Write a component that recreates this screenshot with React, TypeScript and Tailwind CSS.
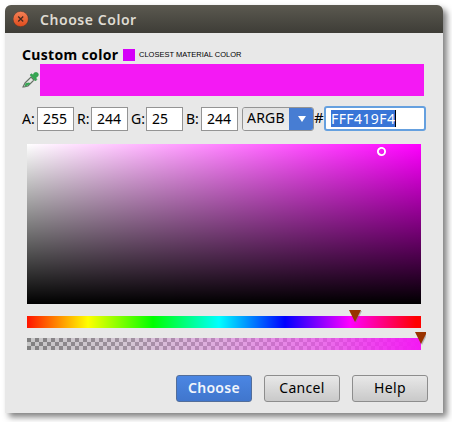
import React from "react";

const channels = [
  { label: "A:", value: "255", group: "w-[52px]" },
  { label: "R:", value: "244", group: "w-[51px]" },
  { label: "G:", value: "25", group: "w-[52px]" },
  { label: "B:", value: "244", group: "w-[52px]" },
];

function Pipette() {
  return (
    <svg className="block h-[17px] w-[17px]" viewBox="0 0 17 17">
      <path d="M3 11 9 5l3 3-6 6-4 1-1 0z" fill="#e4e8e4" stroke="#687268" strokeWidth="1.2" />
      <path d="M3.5 11.3 7 10.5l1.5 1L5.7 13.6 2.5 14.7z" fill="#36a653" />
      <path d="m8 3 1.3-1.3 1.6 1 1.5-1.9q2-1.2 3.3.2 1.4 1.5.1 3.3l-1.9 1.5 1 1.7L13.5 9z" fill="#36a653" stroke="#2b9949" strokeWidth=".5" />
    </svg>
  );
}

function Marker() {
  return (
    <svg className="block h-[13px] w-[13px] overflow-visible" viewBox="0 0 13 13">
      <path d="M1 1h12L7 13z" fill="#777" opacity=".45" />
      <path d="M0 0h12L6 12z" fill="#993300" />
    </svg>
  );
}

export default function App() {
  return (
    <div className="h-[422px] w-[452px] overflow-hidden bg-white pl-[5px] pt-[5px] font-['Noto_Sans',sans-serif] text-black">
      <div className="flex h-[408px] w-[438px] flex-col overflow-hidden rounded-t-[6px] bg-[#e8e8e8] shadow-[4px_4px_6px_0_rgba(0,0,0,0.5)]">
        <header className="flex h-7 shrink-0 items-center bg-linear-to-b from-[#5b5950] to-[#3e3d37] pl-2">
          <svg className="h-4 w-4" viewBox="0 0 16 16">
            <defs>
              <linearGradient id="close" x1="0" y1="0" x2="0" y2="1">
                <stop stopColor="#f58257" />
                <stop offset="1" stopColor="#df4b1c" />
              </linearGradient>
            </defs>
            <circle cx="7.7" cy="8" r="7.7" fill="url(#close)" stroke="#34332e" strokeWidth=".5" />
            <path d="m5.2 5.5 5 5m0-5-5 5" stroke="#47291e" strokeWidth="1.3" />
          </svg>
          <h1 className="ml-[11px] mt-0.5 whitespace-nowrap text-[14px] leading-5 font-semibold tracking-[0.55px] text-[#dfdbd2]">Choose Color</h1>
        </header>

        <main className="flex flex-col px-[17px] pt-[12px]">
          <div className="flex h-[19px] items-center">
            <h2 className="w-[101px] whitespace-nowrap text-[14px] leading-5 font-bold tracking-[0.33px]">Custom color</h2>
            <div className="h-3 w-3 bg-[#d500f9]" />
            <span className="ml-1 whitespace-nowrap pt-px font-['Liberation_Sans',sans-serif] text-[7.5px] leading-3">CLOSEST MATERIAL COLOR</span>
          </div>
          <div className="flex h-8">
            <div className="flex w-[18px] items-center"><Pipette /></div>
            <div className="w-[384px] bg-[#f419f4]" />
          </div>

          <div className="mt-[10px] flex h-[25px] items-center text-[14px] leading-5">
            {channels.map(({ label, value, group }) => (
              <label key={label} className={`mr-[3px] flex shrink-0 items-center justify-between whitespace-nowrap ${group}`}>
                <span>{label}</span>
                <span className="h-6 w-[37px] border border-[#949494] bg-white pl-[5px] leading-[22px]">{value}</span>
              </label>
            ))}
            <div className="ml-px flex h-6 w-[72px] shrink-0 overflow-hidden rounded-[3px] border border-[#949494]">
              <span className="w-[46px] bg-linear-to-b from-[#e2e2e2] to-[#eeeeee] pl-1 leading-[20px] tracking-[0.2px]">ARGB</span>
              <span className="-my-px -mr-px flex w-[25px] items-center justify-center bg-[#477dd3]">
                <svg className="h-[6px] w-2" viewBox="0 0 8 6"><path d="M0 0h8L4 6z" fill="white" /></svg>
              </span>
            </div>
            <span className="mb-[3px] w-[10px] shrink-0 text-[15px] leading-5">#</span>
            <div className="flex h-[25px] w-[102px] shrink-0 items-center rounded-[3px] border-2 border-[#65a0df] bg-white pl-[5px]">
              <span className="h-[17px] w-[65px] whitespace-nowrap border-r border-black bg-[#3875d7] leading-[18px] tracking-[0.4px] text-white">FFF419F4</span>
            </div>
          </div>

          <div className="mx-[5px] mt-[13px] h-40 w-[394px] bg-[linear-gradient(to_top,#000,transparent),linear-gradient(to_right,#fff,#f0f)]">
            <svg className="ml-[350px] mt-[3px] h-[10px] w-[10px]" viewBox="0 0 10 10">
              <circle cx="4.5" cy="4.5" r="3.6" fill="none" stroke="white" strokeWidth="1.9" />
            </svg>
          </div>
          <div className="relative mx-[5px] mt-3 h-3 w-[394px] bg-[linear-gradient(to_right,#f00_-5px,#ff0_61px,#0f0_126px,#0ff_192px,#00f_258px,#f0f_323px,#f00_389px)]">
            <div className="absolute -top-1.5 left-[322px]"><Marker /></div>
          </div>
          <div className="relative mx-[5px] mt-[10px] h-3 w-[394px] bg-[repeating-conic-gradient(#c6c6c6_0_25%,#808080_0_50%)] bg-[length:8px_8px]">
            <div className="h-3 bg-[linear-gradient(to_right,rgba(255,255,255,0),rgba(252,198,252,0.25),rgba(250,140,250,0.5),rgba(247,83,247,0.75),rgb(244,25,244))]" />
            <div className="absolute -top-1.5 left-[388px] w-[11px] overflow-hidden"><Marker /></div>
          </div>

          <div className="mt-[25px] -mr-[7px] flex justify-end gap-3 pr-[5px] text-[14px]">
            <button className="h-[27px] w-[76px] rounded-[3px] border border-[#536e9a] bg-linear-to-b from-[#4b86e3] to-[#4076cd] pb-0.5 leading-5 font-semibold tracking-[0.3px] text-[#f2f5fb]">Choose</button>
            <button className="h-[27px] w-[76px] rounded-[3px] border border-[#8d8d8d] bg-linear-to-b from-[#e8e8e8] to-[#c9c9c9] pb-0.5 leading-5 tracking-[0.3px]">Cancel</button>
            <button className="h-[27px] w-[76px] rounded-[3px] border border-[#8d8d8d] bg-linear-to-b from-[#e8e8e8] to-[#c9c9c9] pb-0.5 leading-5 tracking-[0.4px]">Help</button>
          </div>
        </main>
      </div>
    </div>
  );
}
